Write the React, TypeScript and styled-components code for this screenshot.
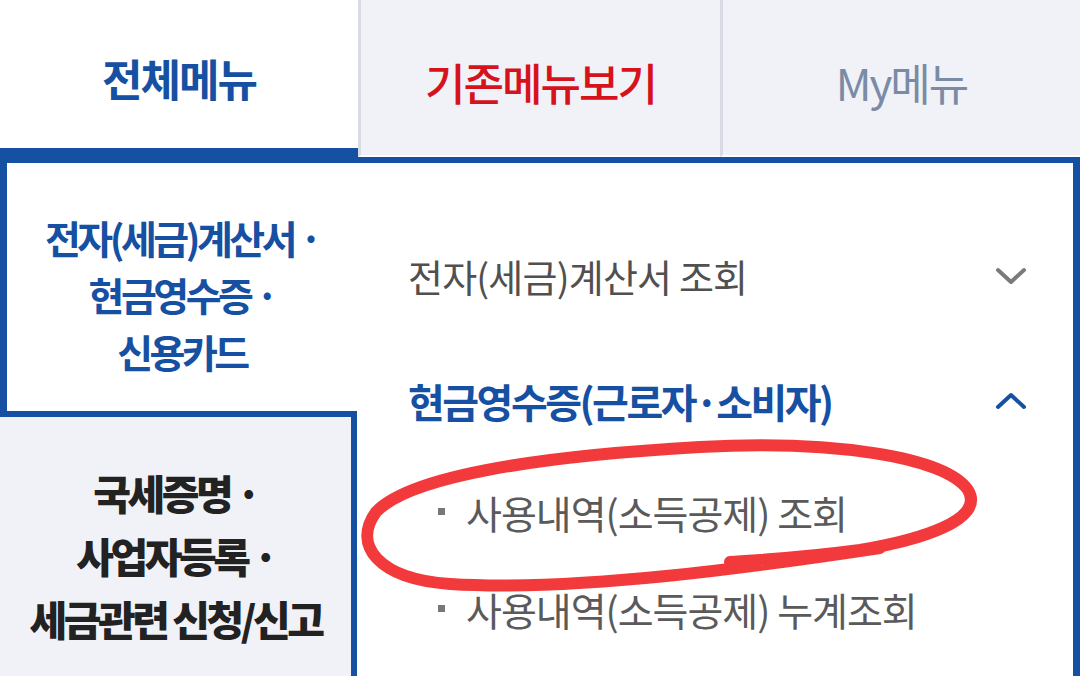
import styled, { createGlobalStyle, css } from 'styled-components';

const BLUE = '#1650a2';
const GRAY_BG = '#f1f2f7';

const GlobalStyle = createGlobalStyle`
  html, body {
    margin: 0;
    padding: 0;
    background: #fff;
  }
  body {
    font-family: "Noto Sans CJK KR", "Noto Sans", sans-serif;
  }
`;

const Screen = styled.div`
  position: relative;
  width: 1080px;
  height: 676px;
  overflow: hidden;
  background: #fff;
`;

const TabBar = styled.nav`
  display: grid;
  grid-template-columns: 358px 362px 1fr;
  height: 157px;
`;

const Tab = styled.button<{ active?: boolean; tone: 'blue' | 'red' | 'muted' }>`
  display: flex;
  align-items: center;
  justify-content: center;
  padding: 8px 0 0;
  border: 0;
  border-left: 3px solid #d9dbe4;
  border-bottom: 2px solid #fff;
  background: ${GRAY_BG};
  font-family: inherit;
  font-size: 44px;
  letter-spacing: -2px;
  font-weight: ${({ tone }) => (tone === 'red' ? 500 : 400)};
  color: ${({ tone }) =>
    tone === 'blue' ? BLUE : tone === 'red' ? '#d6121c' : '#7a8ba5'};

  ${({ active }) =>
    active &&
    css`
      border-left: 0;
      border-bottom: 9px solid ${BLUE};
      background: #fff;
      font-weight: 700;
    `}
`;

const Body = styled.div`
  display: grid;
  grid-template-columns: 357px 1fr;
  height: 519px;
  border-top: 6px solid ${BLUE};
  border-right: 7px solid ${BLUE};
  box-sizing: border-box;
`;

const CategoryList = styled.div`
  display: flex;
  flex-direction: column;
`;

const Category = styled.div<{ active?: boolean }>`
  display: flex;
  flex-direction: column;
  align-items: center;
  text-align: center;
  box-sizing: border-box;

  ${({ active }) =>
    active
      ? css`
          height: 254px;
          padding-top: 46px;
          border-left: 7px solid ${BLUE};
          border-bottom: 6px solid ${BLUE};
          background: #fff;
          color: ${BLUE};
          font-size: 39px;
          line-height: 57px;
          letter-spacing: -3.5px;
          font-weight: 700;
        `
      : css`
          flex: 1;
          padding-top: 44px;
          border-right: 6px solid ${BLUE};
          background: ${GRAY_BG};
          color: #222;
          font-size: 41px;
          line-height: 63px;
          letter-spacing: -3.5px;
          font-weight: 900;
        `}
`;

const Line = styled.span`
  display: block;
  white-space: nowrap;
`;

const Panel = styled.div`
  display: flex;
  flex-direction: column;
  padding: 50px 46px 0 51px;
`;

const MenuRow = styled.div`
  display: flex;
  align-items: center;
  justify-content: space-between;
  height: 125px;
`;

const MenuLabel = styled.span<{ open?: boolean }>`
  white-space: nowrap;
  font-size: ${({ open }) => (open ? '40px' : '38px')};
  letter-spacing: ${({ open }) => (open ? '-2.5px' : '-0.8px')};
  font-weight: ${({ open }) => (open ? 700 : 400)};
  color: ${({ open }) => (open ? BLUE : '#505050')};
`;

const SubList = styled.ul`
  margin: 0;
  padding: 0 0 0 30px;
  list-style: none;
`;

const SubItem = styled.li`
  display: flex;
  align-items: center;
  gap: 21px;
  height: 97px;
  white-space: nowrap;
  font-size: 39px;
  letter-spacing: -1px;
  color: #5a5a5a;

  &::before {
    content: '';
    width: 7px;
    height: 7px;
    background: #777;
  }
`;

const Annotation = styled.svg`
  position: absolute;
  inset: 0;
  pointer-events: none;
`;

function Chevron({ up }: { up?: boolean }) {
  return (
    <svg width="32" height="18" viewBox="0 0 32 18" aria-hidden>
      <polyline
        points={up ? '3,15 16,3 29,15' : '3,3 16,15 29,3'}
        fill="none"
        stroke={up ? BLUE : '#7a7a7a'}
        strokeWidth="4"
        strokeLinecap="round"
        strokeLinejoin="round"
      />
    </svg>
  );
}

export default function App() {
  return (
    <>
      <GlobalStyle />
      <Screen>
        <TabBar>
          <Tab active tone="blue">전체메뉴</Tab>
          <Tab tone="red">기존메뉴보기</Tab>
          <Tab tone="muted">My메뉴</Tab>
        </TabBar>
        <Body>
          <CategoryList>
            <Category active>
              <Line>전자(세금)계산서 ·</Line>
              <Line>현금영수증 ·</Line>
              <Line>신용카드</Line>
            </Category>
            <Category>
              <Line>국세증명 ·</Line>
              <Line>사업자등록 ·</Line>
              <Line>세금관련 신청/신고</Line>
            </Category>
          </CategoryList>
          <Panel>
            <MenuRow>
              <MenuLabel>전자(세금)계산서 조회</MenuLabel>
              <Chevron />
            </MenuRow>
            <MenuRow>
              <MenuLabel open>현금영수증(근로자·소비자)</MenuLabel>
              <Chevron up />
            </MenuRow>
            <SubList>
              <SubItem>사용내역(소득공제) 조회</SubItem>
              <SubItem>사용내역(소득공제) 누계조회</SubItem>
            </SubList>
          </Panel>
        </Body>
        <Annotation width="1080" height="676" viewBox="0 0 1080 676">
          <path
            d="M 880 548 C 760 566, 580 592, 450 584 C 378 579, 352 545, 376 512 C 410 476, 540 456, 700 447 C 830 440, 945 456, 968 490 C 986 520, 920 540, 860 550 C 800 558, 760 560, 730 562"
            fill="none"
            stroke="#f23a3c"
            strokeWidth="12"
            strokeLinecap="round"
            strokeLinejoin="round"
          />
        </Annotation>
      </Screen>
    </>
  );
}
